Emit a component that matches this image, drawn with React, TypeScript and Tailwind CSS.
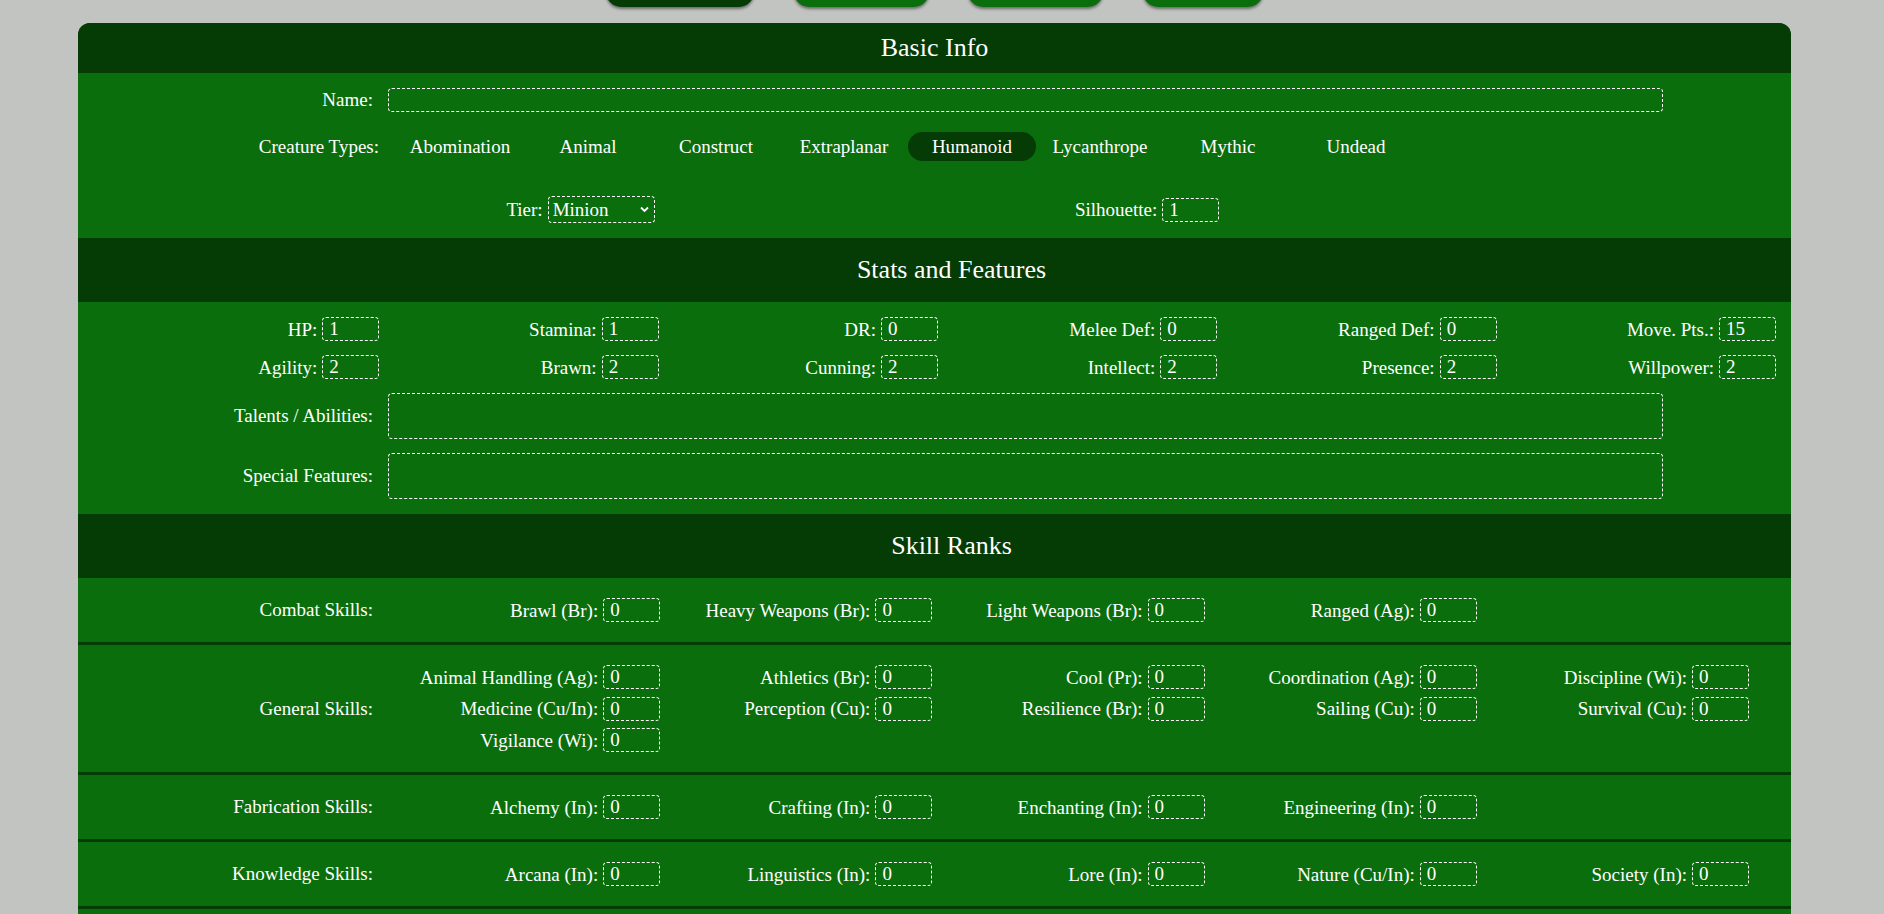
import React from "react";

const DARK = "bg-[#053b05]";

function Field({ label, value }: { label: string; value: string }) {
  return (
    <div className="flex h-[24px] items-center justify-end gap-[5px]">
      <span className="whitespace-nowrap leading-none">{label}</span>
      <input
        defaultValue={value}
        className="h-[24px] w-[57px] rounded-[4px] border border-dashed border-white bg-transparent px-[6px] text-[19px] leading-none text-white outline-none"
      />
    </div>
  );
}

function SectionHeader({ title, first }: { title: string; first?: boolean }) {
  return (
    <div
      className={`${DARK} flex items-center justify-center text-[26px] ${
        first ? "h-[50px]" : "h-[64px] pl-[34px]"
      }`}
    >
      {title}
    </div>
  );
}

function SkillRow({ label, items }: { label: string; items: [string, string][] }) {
  return (
    <div className="flex items-center border-b-[3px] border-[#053b05] py-[20px]">
      <div className="w-[295px] shrink-0 text-right">{label}</div>
      <div className="ml-[15px] grid w-[1361px] grid-cols-5 gap-y-[7.5px]">
        {items.map(([l, v]) => (
          <Field key={l} label={l} value={v} />
        ))}
      </div>
    </div>
  );
}

export default function App() {
  const types = [
    "Abomination",
    "Animal",
    "Construct",
    "Extraplanar",
    "Humanoid",
    "Lycanthrope",
    "Mythic",
    "Undead",
  ];
  const stats1: [string, string][] = [
    ["HP:", "1"],
    ["Stamina:", "1"],
    ["DR:", "0"],
    ["Melee Def:", "0"],
    ["Ranged Def:", "0"],
    ["Move. Pts.:", "15"],
  ];
  const stats2: [string, string][] = [
    ["Agility:", "2"],
    ["Brawn:", "2"],
    ["Cunning:", "2"],
    ["Intellect:", "2"],
    ["Presence:", "2"],
    ["Willpower:", "2"],
  ];
  return (
    <div className="flex min-h-screen flex-col bg-[#c1c4c1] font-['Liberation_Serif','Times_New_Roman',serif] text-[19px] leading-[1.15]">
      <div className="ml-[78px] w-[1713px]">
        <div className="mt-[-23px] flex h-[30px] justify-center gap-[39.5px]">
          <div className={`h-[30px] w-[148px] rounded-[15px] ${DARK} shadow-[0_2px_3px_rgba(0,0,0,0.45)]`} />
          <div className="h-[30px] w-[135px] rounded-[15px] bg-[#0b6e0d] shadow-[0_2px_3px_rgba(0,0,0,0.45)]" />
          <div className="h-[30px] w-[135px] rounded-[15px] bg-[#0b6e0d] shadow-[0_2px_3px_rgba(0,0,0,0.45)]" />
          <div className="h-[30px] w-[120px] rounded-[15px] bg-[#0b6e0d] shadow-[0_2px_3px_rgba(0,0,0,0.45)]" />
        </div>

        <div className="mt-[16px] overflow-hidden rounded-t-[12px] bg-[#0b6e0d] text-white">
          <SectionHeader title="Basic Info" first />
          <div className="flex flex-col py-[15px]">
            <div className="flex h-[24px] items-center">
              <div className="w-[295px] shrink-0 text-right">Name:</div>
              <input className="ml-[15px] h-[24px] w-[1275px] rounded-[4px] border border-dashed border-white bg-transparent px-[6px] text-white outline-none" />
            </div>
            <div className="mt-[20px] flex h-[29px] items-center">
              <div className="w-[301px] shrink-0 text-right">Creature Types:</div>
              <div className="ml-[17px] flex">
                {types.map((t) => (
                  <div
                    key={t}
                    className={`flex h-[29px] w-[128px] items-center justify-center rounded-full ${
                      t === "Humanoid" ? DARK : ""
                    }`}
                  >
                    {t}
                  </div>
                ))}
              </div>
            </div>
            <div className="mt-[35px] grid h-[27px] grid-cols-6 items-center pl-[22px] pr-[15px]">
              <div />
              <div className="mr-[4px] flex items-center justify-end gap-[5px]">
                <span>Tier:</span>
                <div className="relative">
                  <select className="h-[27px] w-[107px] appearance-none rounded-[4px] border border-dashed border-white bg-transparent pl-[4px] text-white outline-none">
                    <option className="text-black">Minion</option>
                    <option className="text-black">Rival</option>
                    <option className="text-black">Nemesis</option>
                  </select>
                  <svg
                    className="pointer-events-none absolute right-[6px] top-[10px]"
                    width="9"
                    height="7"
                    viewBox="0 0 9 7"
                    fill="none"
                  >
                    <path d="M1 1.5 L4.5 5 L8 1.5" stroke="white" strokeWidth="1.8" />
                  </svg>
                </div>
              </div>
              <div />
              <div className="-mr-[2px]">
                <Field label="Silhouette:" value="1" />
              </div>
              <div />
              <div />
            </div>
          </div>

          <SectionHeader title="Stats and Features" />
          <div className="flex flex-col gap-[14px] py-[15px]">
            <div className="grid grid-cols-6 pl-[22px] pr-[15px]">
              {stats1.map(([l, v]) => (
                <Field key={l} label={l} value={v} />
              ))}
            </div>
            <div className="grid grid-cols-6 pl-[22px] pr-[15px]">
              {stats2.map(([l, v]) => (
                <Field key={l} label={l} value={v} />
              ))}
            </div>
            <div className="flex items-center">
              <div className="w-[295px] shrink-0 text-right">Talents / Abilities:</div>
              <textarea className="ml-[15px] h-[46px] w-[1275px] resize-none rounded-[4px] border border-dashed border-white bg-transparent px-[6px] text-white outline-none" />
            </div>
            <div className="flex items-center">
              <div className="w-[295px] shrink-0 text-right">Special Features:</div>
              <textarea className="ml-[15px] h-[46px] w-[1275px] resize-none rounded-[4px] border border-dashed border-white bg-transparent px-[6px] text-white outline-none" />
            </div>
          </div>

          <SectionHeader title="Skill Ranks" />
          <SkillRow
            label="Combat Skills:"
            items={[
              ["Brawl (Br):", "0"],
              ["Heavy Weapons (Br):", "0"],
              ["Light Weapons (Br):", "0"],
              ["Ranged (Ag):", "0"],
            ]}
          />
          <SkillRow
            label="General Skills:"
            items={[
              ["Animal Handling (Ag):", "0"],
              ["Athletics (Br):", "0"],
              ["Cool (Pr):", "0"],
              ["Coordination (Ag):", "0"],
              ["Discipline (Wi):", "0"],
              ["Medicine (Cu/In):", "0"],
              ["Perception (Cu):", "0"],
              ["Resilience (Br):", "0"],
              ["Sailing (Cu):", "0"],
              ["Survival (Cu):", "0"],
              ["Vigilance (Wi):", "0"],
            ]}
          />
          <SkillRow
            label="Fabrication Skills:"
            items={[
              ["Alchemy (In):", "0"],
              ["Crafting (In):", "0"],
              ["Enchanting (In):", "0"],
              ["Engineering (In):", "0"],
            ]}
          />
          <SkillRow
            label="Knowledge Skills:"
            items={[
              ["Arcana (In):", "0"],
              ["Linguistics (In):", "0"],
              ["Lore (In):", "0"],
              ["Nature (Cu/In):", "0"],
              ["Society (In):", "0"],
            ]}
          />
          <div className="h-[64px]" />
        </div>
      </div>
    </div>
  );
}
